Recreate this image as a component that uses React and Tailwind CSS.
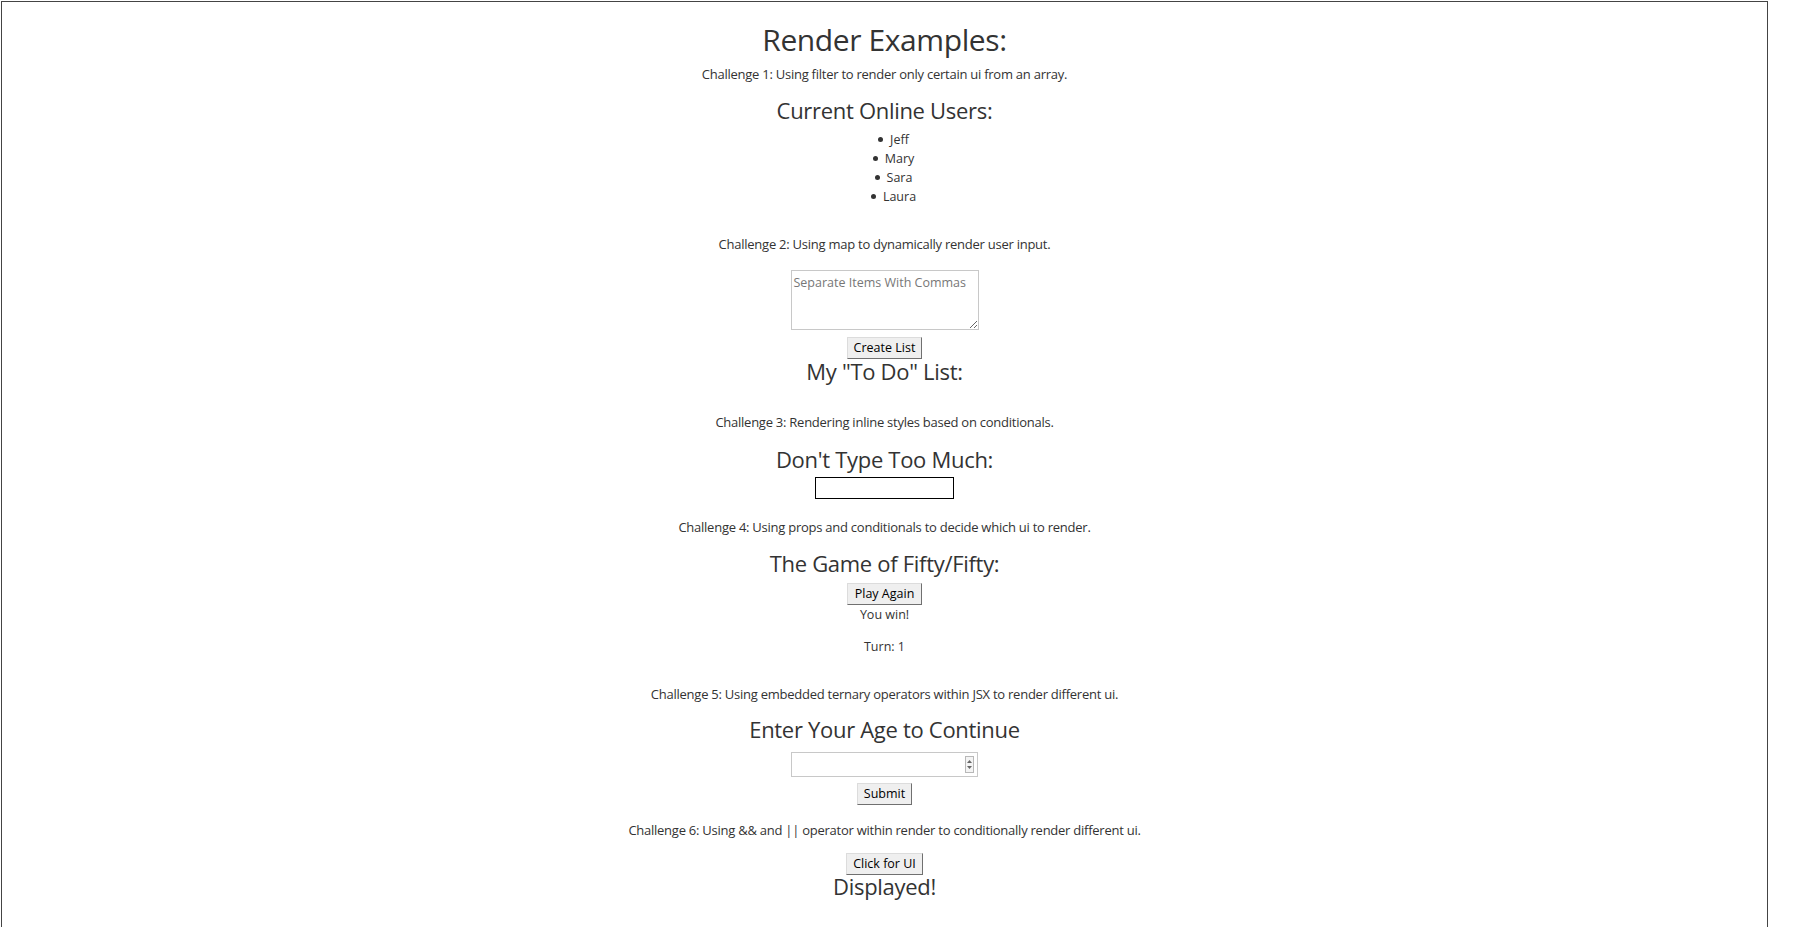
import React, { useState } from "react";

const font = { fontFamily: '"Open Sans", "Noto Sans", sans-serif' };

function Challenge({ className = "", children }) {
  return (
    <p className={`h-4 text-[13px] leading-4 tracking-[-0.25px] text-[#333] ${className}`}>{children}</p>
  );
}

function Heading({ className = "", children }) {
  return <h2 className={`h-[30px] text-[22px] leading-[30px] tracking-[-0.3px] text-[#333] ${className}`}>{children}</h2>;
}

function Button({ className = "", children, onClick }) {
  return (
    <button
      onClick={onClick}
      className={`h-[22px] bg-[#efefef] border border-t-[#dcdcdc] border-l-[#dcdcdc] border-r-[#707070] border-b-[#707070] text-[12.5px] leading-[18px] text-black ${className}`}
    >
      {children}
    </button>
  );
}

export default function App() {
  const users = ["Jeff", "Mary", "Sara", "Laura"];
  const [shown, setShown] = useState(true);

  return (
    <div className="h-screen overflow-hidden bg-white pl-px pt-px" style={font}>
      <div className="w-[1767px] h-[1000px] border border-[#444] border-b-0 flex flex-col items-center text-center">
        <h1 className="mt-[20px] h-9 text-[30px] leading-9 tracking-[-0.4px] text-[#333]">Render Examples:</h1>
        <Challenge className="mt-2">Challenge 1: Using filter to render only certain ui from an array.</Challenge>
        <Heading className="mt-[13px]">Current Online Users:</Heading>
        <ul className="mt-[5px] pl-[18px] flex flex-col items-center text-[12.5px] leading-[19px] text-[#333]">
          {users.map((u) => (
            <li key={u} className="flex items-center gap-[7px]">
              <span className="w-[5px] h-[5px] rounded-full bg-[#333]" />
              <span>{u}</span>
            </li>
          ))}
        </ul>

        <Challenge className="mt-[30px]">Challenge 2: Using map to dynamically render user input.</Challenge>
        <textarea
          placeholder="Separate Items With Commas"
          className="mt-[18px] w-[188px] h-[60px] border border-[#c8c8c8] px-[2px] pt-[3px] text-[12.5px] leading-[18px] text-[#333] placeholder:text-[#777] outline-none"
        />
        <Button className="mt-[7px] w-[75px]">Create List</Button>
        <Heading className="-mt-[3px]">My "To Do" List:</Heading>

        <Challenge className="mt-[28px]">Challenge 3: Rendering inline styles based on conditionals.</Challenge>
        <Heading className="mt-[14px]">Don't Type Too Much:</Heading>
        <input type="text" className="mt-[3px] w-[139px] h-[22px] border border-black outline-none" />

        <Challenge className="mt-[20px]">Challenge 4: Using props and conditionals to decide which ui to render.</Challenge>
        <Heading className="mt-[13px]">The Game of Fifty/Fifty:</Heading>
        <Button className="mt-[5px] w-[75px] h-[21px]">Play Again</Button>
        <p className="mt-[2px] h-4 text-[12.5px] leading-4 text-[#333]">You win!</p>
        <p className="mt-4 h-4 text-[12.5px] leading-4 text-[#333]">Turn: 1</p>

        <Challenge className="mt-[31px]">Challenge 5: Using embedded ternary operators within JSX to render different ui.</Challenge>
        <Heading className="mt-[12px]">Enter Your Age to Continue</Heading>
        <div className="relative mt-2 w-[187px] h-[25px]">
          <input type="text" className="w-full h-full border border-[#c8c8c8] outline-none" />
          <span className="absolute right-[4px] top-[4px] w-[9px] h-[17px] border border-[#b8b8b8] bg-[#f4f4f4] flex flex-col items-center justify-center gap-[3px]">
            <svg width="5" height="3" viewBox="0 0 5 3"><path d="M0 3 L2.5 0 L5 3 Z" fill="#666" /></svg>
            <svg width="5" height="3" viewBox="0 0 5 3"><path d="M0 0 L2.5 3 L5 0 Z" fill="#666" /></svg>
          </span>
        </div>
        <Button className="mt-[6px] w-[55px]">Submit</Button>

        <Challenge className="mt-[17px]">Challenge 6: Using &amp;&amp; and || operator within render to conditionally render different ui.</Challenge>
        <Button className="mt-[15px] w-[77px] h-[21px]" onClick={() => setShown(!shown)}>Click for UI</Button>
        {shown && <Heading className="-mt-[4px]">Displayed!</Heading>}
      </div>
    </div>
  );
}
